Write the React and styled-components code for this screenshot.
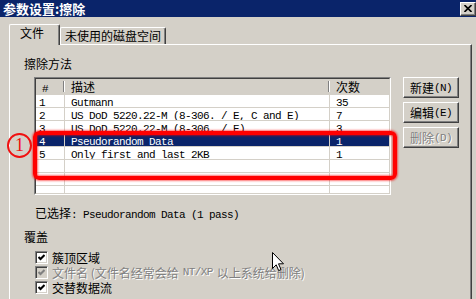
import React from "react";
import styled, { createGlobalStyle } from "styled-components";

const GlobalStyle = createGlobalStyle`
  html, body { margin: 0; padding: 0; }
  body {
    width: 476px;
    height: 299px;
    overflow: hidden;
    background: #d4d0c8;
    font-family: "Noto Sans CJK SC", "Liberation Sans", sans-serif;
    font-size: 12px;
    color: #000;
  }
`;

const Window = styled.div`
  position: relative;
  width: 476px;
  height: 299px;
  display: flex;
  flex-direction: column;
  background: #d4d0c8;
  overflow: hidden;
`;

const TitleBar = styled.div`
  flex: none;
  height: 17px;
  background: #0a246a;
  display: flex;
  align-items: center;
  justify-content: space-between;
  padding: 0 0 0 3px;
`;

const Title = styled.span`
  color: #fff;
  font-weight: bold;
  font-size: 13px;
  line-height: 17px;
`;

const CloseButton = styled.div`
  box-sizing: border-box;
  width: 16px;
  height: 14px;
  background: #d4d0c8;
  border-top: 1px solid #fff;
  border-left: 1px solid #fff;
  border-right: 1px solid #404040;
  border-bottom: 1px solid #404040;
  box-shadow: inset -1px -1px #808080;
  display: flex;
  align-items: center;
  justify-content: center;
`;

const Body = styled.div`
  flex: 1;
  min-height: 0;
  display: flex;
  flex-direction: column;
  padding: 7px 4px 0 9px;
`;

const TabStrip = styled.div`
  flex: none;
  height: 20px;
  display: flex;
  align-items: flex-end;
  position: relative;
  z-index: 1;
`;

const Tab = styled.div`
  box-sizing: border-box;
  width: ${p => p.$width}px;
  height: ${p => (p.$active ? 21 : 17)}px;
  margin-bottom: ${p => (p.$active ? -1 : 0)}px;
  padding: ${p => (p.$active ? "1px 0 0 10px" : "1px 0 0 4px")};
  background: #d4d0c8;
  border-top: 1px solid #fff;
  border-left: 1px solid #fff;
  border-right: 1px solid #404040;
  box-shadow: inset -1px 0 #808080;
  border-radius: 2px 2px 0 0;
  line-height: 14px;
  white-space: nowrap;
`;

const Panel = styled.div`
  flex: 1;
  box-sizing: border-box;
  border-top: 1px solid #fff;
  border-left: 1px solid #fff;
  border-right: 1px solid #404040;
  box-shadow: inset -1px 0 #808080;
  padding: 12px 0 0 14px;
  display: flex;
  flex-direction: column;
`;

const SectionLabel = styled.div`
  line-height: 13px;
  margin-top: ${p => p.$top || 0}px;
`;

const MethodRow = styled.div`
  display: flex;
  gap: 12px;
  margin: 7px 0 0 10px;
`;

const List = styled.div`
  box-sizing: border-box;
  width: 357px;
  height: 118px;
  border-top: 1px solid #808080;
  border-left: 1px solid #808080;
  border-right: 1px solid #fff;
  border-bottom: 1px solid #fff;
`;

const ListInner = styled.div`
  box-sizing: border-box;
  height: 100%;
  border-top: 1px solid #404040;
  border-left: 1px solid #404040;
  border-right: 1px solid #d4d0c8;
  border-bottom: 1px solid #d4d0c8;
  background: #fff;
  overflow: hidden;
`;

const HeaderRow = styled.div`
  display: grid;
  grid-template-columns: 29px 265px 1fr;
  height: 15px;
  background: #d4d0c8;
  border-bottom: 1px solid #d4d0c8;
`;

const HeaderCell = styled.div`
  position: relative;
  padding-left: ${p => p.$pad}px;
  line-height: 16px;
  &::after {
    content: "";
    display: ${p => (p.$last ? "none" : "block")};
    position: absolute;
    right: 0;
    top: 2px;
    height: 11px;
    border-left: 1px solid #808080;
    border-right: 1px solid #fff;
  }
`;

const Row = styled.div`
  display: grid;
  grid-template-columns: 29px 265px 1fr;
  height: 13px;
  background: ${p => (p.$selected ? "#0a246a" : "#fff")};
  color: ${p => (p.$selected ? "#fff" : "#000")};
`;

const Cell = styled.div`
  box-sizing: border-box;
  padding-left: ${p => p.$pad}px;
  border-bottom: 1px solid #d4d0c8;
  border-right: ${p => (p.$last ? "none" : "1px solid #d4d0c8")};
  line-height: 12px;
  white-space: nowrap;
  overflow: hidden;
`;

const Latin = styled.span`
  font-family: "Liberation Mono", monospace;
  font-size: 11px;
  letter-spacing: -0.6px;
`;

const ButtonColumn = styled.div`
  display: flex;
  flex-direction: column;
  gap: 4px;
`;

const Button = styled.div`
  box-sizing: border-box;
  width: 56px;
  height: 21px;
  background: #d4d0c8;
  border-top: 1px solid #fff;
  border-left: 1px solid #fff;
  border-right: 1px solid #404040;
  border-bottom: 1px solid #404040;
  box-shadow: inset -1px -1px #808080;
  display: flex;
  align-items: center;
  justify-content: center;
  color: ${p => (p.$disabled ? "#808080" : "#000")};
  text-shadow: ${p => (p.$disabled ? "1px 1px #fff" : "none")};
  white-space: nowrap;
`;

const Selected = styled.div`
  margin: 11px 0 0 11px;
  line-height: 13px;
  white-space: nowrap;
`;

const CheckList = styled.div`
  display: flex;
  flex-direction: column;
  margin: 7px 0 0 11px;
`;

const CheckRow = styled.div`
  display: flex;
  align-items: center;
  gap: 4px;
  height: 15px;
  line-height: 13px;
  white-space: nowrap;
  color: ${p => (p.$disabled ? "#808080" : "#000")};
  text-shadow: ${p => (p.$disabled ? "1px 1px #fff" : "none")};
`;

const CheckBox = styled.span`
  box-sizing: border-box;
  width: 13px;
  height: 13px;
  flex: none;
  background: ${p => (p.$disabled ? "#d4d0c8" : "#fff")};
  border-top: 1px solid #808080;
  border-left: 1px solid #808080;
  border-right: 1px solid #fff;
  border-bottom: 1px solid #fff;
  box-shadow: inset 1px 1px #404040, inset -1px -1px #d4d0c8;
  display: flex;
  align-items: center;
  justify-content: center;
`;

const RedBox = styled.div`
  position: absolute;
  left: 33px;
  top: 131px;
  width: 364px;
  height: 49px;
  box-sizing: border-box;
  border: 4px solid #ff0000;
  border-radius: 6px;
  box-shadow: 0 0 2px 1px rgba(255, 0, 0, 0.55), inset 0 0 2px 1px rgba(255, 0, 0, 0.55);
  pointer-events: none;
`;

const Badge = styled.div`
  position: absolute;
  left: 7px;
  top: 133px;
  width: 25px;
  height: 25px;
  box-sizing: border-box;
  border: 2px solid #f01010;
  border-radius: 50%;
  color: #f01010;
  font-family: "Liberation Serif", serif;
  font-size: 18px;
  line-height: 21px;
  text-align: center;
`;

const Cursor = styled.svg`
  position: absolute;
  left: 272px;
  top: 252px;
`;

const rows = [
  { n: "1", desc: "Gutmann", count: "35" },
  { n: "2", desc: "US DoD 5220.22-M (8-306. / E, C and E)", count: "7" },
  { n: "3", desc: "US DoD 5220.22-M (8-306. / E)", count: "3" },
  { n: "4", desc: "Pseudorandom Data", count: "1", selected: true },
  { n: "5", desc: "Only first and last 2KB", count: "1" },
  {},
  {},
  {},
];

const Check = ({ color = "#000" }) => (
  <svg width="7" height="7" viewBox="0 0 7 7">
    <path d="M0.5 3 L2.5 5 L6.5 1" stroke={color} strokeWidth="2" fill="none" />
  </svg>
);

export default function App() {
  return (
    <>
      <GlobalStyle />
      <Window>
        <TitleBar>
          <Title>参数设置:擦除</Title>
          <CloseButton>
            <svg width="8" height="7" viewBox="0 0 8 7">
              <path d="M0.5 0 L7.5 7 M7.5 0 L0.5 7" stroke="#000" strokeWidth="1.6" />
            </svg>
          </CloseButton>
        </TitleBar>
        <Body>
          <TabStrip>
            <Tab $active $width={51}>文件</Tab>
            <Tab $width={106}>未使用的磁盘空间</Tab>
          </TabStrip>
          <Panel>
            <SectionLabel>擦除方法</SectionLabel>
            <MethodRow>
              <List>
                <ListInner>
                  <HeaderRow>
                    <HeaderCell $pad={6}><Latin>#</Latin></HeaderCell>
                    <HeaderCell $pad={6}>描述</HeaderCell>
                    <HeaderCell $pad={6} $last>次数</HeaderCell>
                  </HeaderRow>
                  {rows.map((r, i) => (
                    <Row key={i} $selected={r.selected}>
                      <Cell $pad={3}><Latin>{r.n}</Latin></Cell>
                      <Cell $pad={6}><Latin>{r.desc}</Latin></Cell>
                      <Cell $pad={6} $last><Latin>{r.count}</Latin></Cell>
                    </Row>
                  ))}
                </ListInner>
              </List>
              <ButtonColumn>
                <Button>新建<Latin>(N)</Latin></Button>
                <Button>编辑<Latin>(E)</Latin></Button>
                <Button $disabled>删除<Latin>(D)</Latin></Button>
              </ButtonColumn>
            </MethodRow>
            <Selected>
              已选择<Latin>: Pseudorandom Data (1 pass)</Latin>
            </Selected>
            <SectionLabel $top={8}>覆盖</SectionLabel>
            <CheckList>
              <CheckRow>
                <CheckBox><Check /></CheckBox>
                簇顶区域
              </CheckRow>
              <CheckRow $disabled>
                <CheckBox $disabled><Check color="#808080" /></CheckBox>
                文件名 (文件名经常会给<Latin>NT/XP</Latin>以上系统给删除)
              </CheckRow>
              <CheckRow>
                <CheckBox><Check /></CheckBox>
                交替数据流
              </CheckRow>
            </CheckList>
          </Panel>
        </Body>
        <RedBox />
        <Badge>1</Badge>
        <Cursor width="13" height="20" viewBox="0 0 13 20">
          <path
            d="M0.5 0.5 L0.5 16.5 L4.2 12.8 L6.7 18.6 L9 17.6 L6.5 11.8 L11.5 11.8 Z"
            fill="#fff"
            stroke="#000"
            strokeWidth="1"
          />
        </Cursor>
      </Window>
    </>
  );
}
